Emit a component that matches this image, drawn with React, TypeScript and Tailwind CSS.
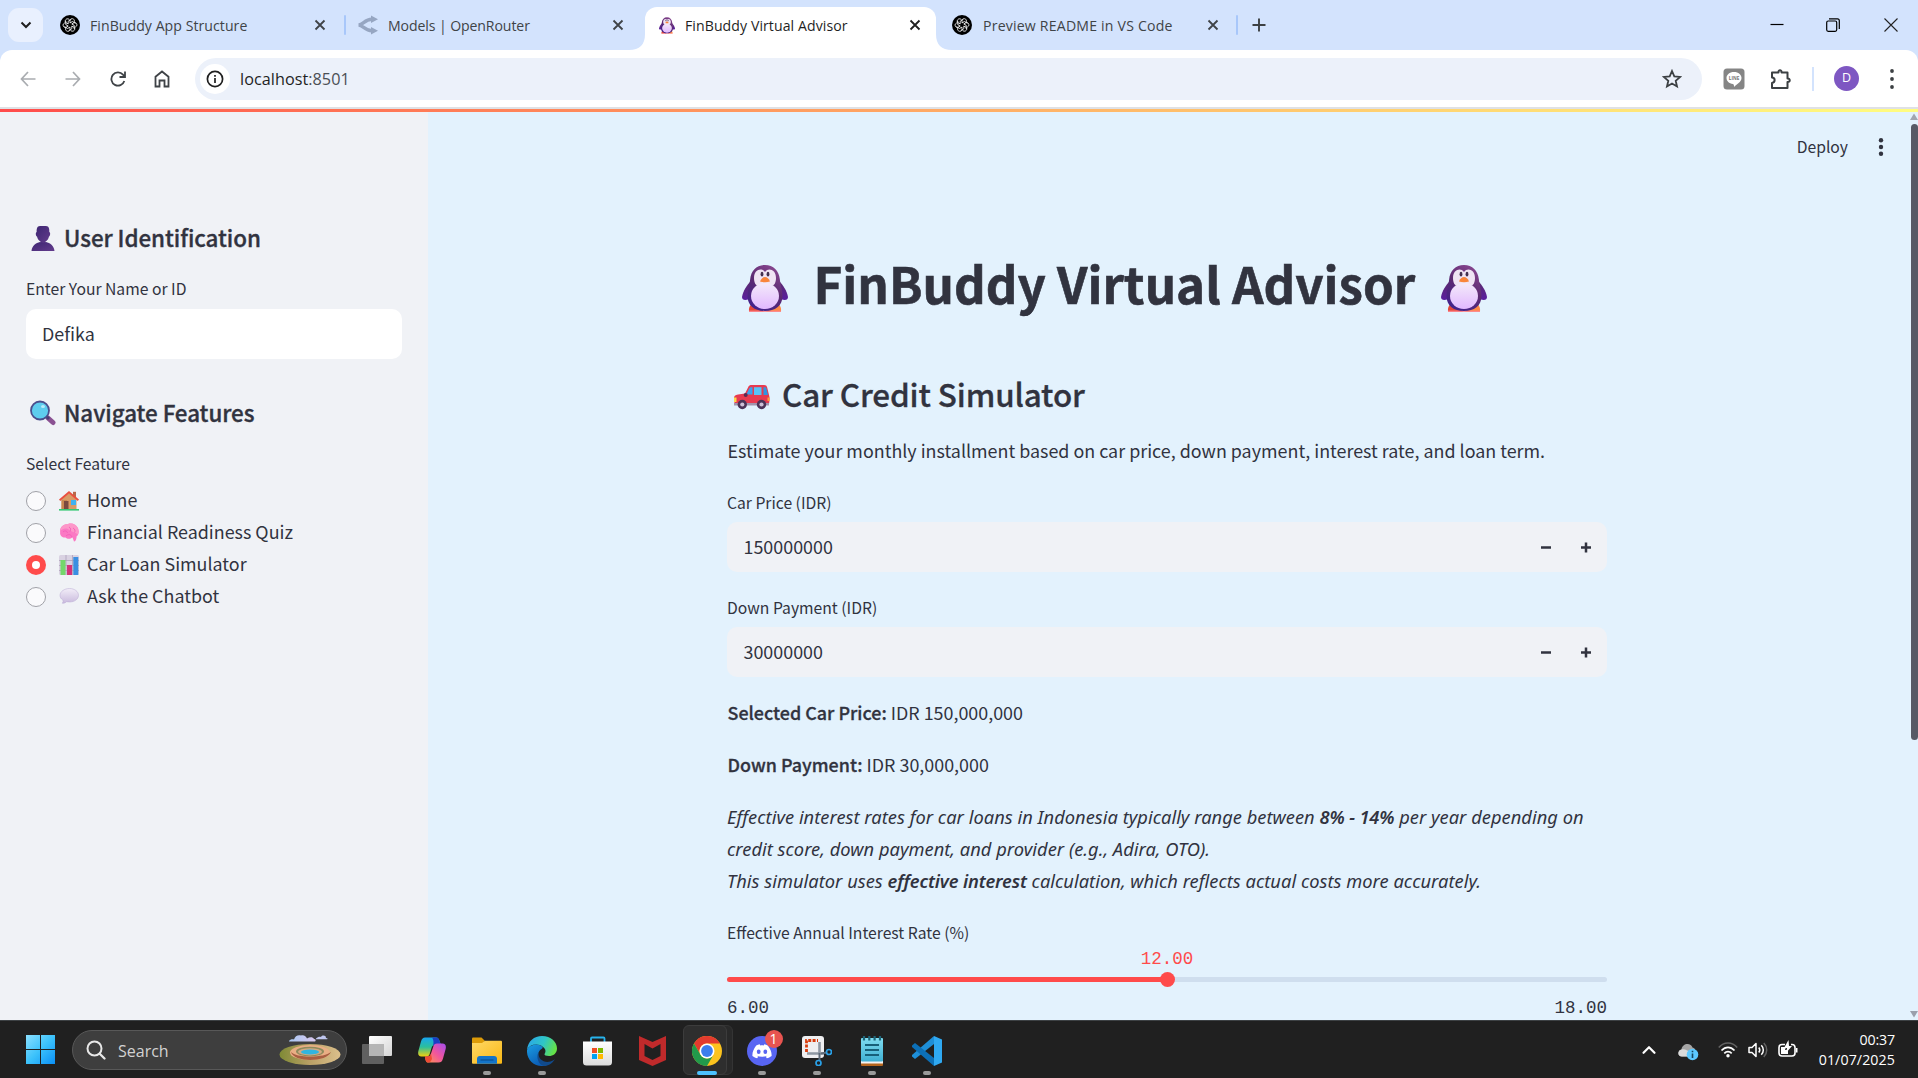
import React from "react";
import { Search, ChevronUp } from "lucide-react";

/* ---------- emoji drawings ---------- */

function Penguin({ className, id }: { className: string; id: string }) {
  return (
    <svg viewBox="0 0 46 47" className={className}>
      <defs>
        <linearGradient id={`${id}b`} x1="0.8" y1="0" x2="0.3" y2="1">
          <stop offset="0" stopColor="#8a4890" />
          <stop offset="0.5" stopColor="#5c2a72" />
          <stop offset="1" stopColor="#42228c" />
        </linearGradient>
        <linearGradient id={`${id}w`} x1="0" y1="0" x2="0" y2="1">
          <stop offset="0" stopColor="#5b2a6c" />
          <stop offset="1" stopColor="#5a1fa0" />
        </linearGradient>
        <linearGradient id={`${id}l`} x1="0" y1="0" x2="0" y2="1">
          <stop offset="0" stopColor="#f3eafa" />
          <stop offset="1" stopColor="#e2b8ff" />
        </linearGradient>
      </defs>
      <path d="M7 46.6C6.500 42 8.500 39 12 38L22 46.600Z" fill="#e2483a" />
      <path d="M39 46.600C39.500 42 37.500 39 34 38L24 46.600Z" fill="#ff8a45" />
      <path d="M7 45.600H39V46.800H7Z" fill="#ff7f86" />
      <path d="M9 16C5 20 1 26 0 32C0 35 3 36 7 34Z" fill={`url(#${id}w)`} />
      <path d="M37 16C41 20 45 26 46 32C46 35 43 36 39 34Z" fill={`url(#${id}w)`} />
      <path d="M23 0C31.500 0 37 6 37.800 14C38.200 20 40.500 25 40.500 31C40.500 41 33 46 23 46C13 46 5.500 41 5.500 31C5.500 25 7.800 20 8.200 14C9 6 14.500 0 23 0Z" fill={`url(#${id}b)`} />
      <path d="M23 7C20 2.500 12 4 12 13C12 18 14 21 17 21H29C32 21 34 18 34 13C34 4 26 2.500 23 7Z" fill="#f0e4f4" />
      <ellipse cx="23" cy="31" rx="14" ry="13" fill={`url(#${id}l)`} />
      <ellipse cx="20" cy="9.200" rx="1.400" ry="2.400" fill="#43304f" />
      <ellipse cx="26" cy="9.200" rx="1.400" ry="2.400" fill="#43304f" />
      <path d="M18 16.500C19 13.500 21 12 23 12C25 12 27 13.500 28 16.500Q23 17.800 18 16.500Z" fill="#f9853a" />
    </svg>
  );
}

function Silhouette() {
  return (
    <svg viewBox="0 0 24 25" className="h-[25px] w-6">
      <defs>
        <linearGradient id="sil" x1="0" y1="0" x2="1" y2="1">
          <stop offset="0" stopColor="#3d2672" />
          <stop offset="1" stopColor="#633b8c" />
        </linearGradient>
      </defs>
      <path d="M9 0H15C18 0 18.500 3 18.300 6C19.500 6 19.500 10 18 10.500C17.500 13 16 14.800 14.500 15.500V17H9.500V15.500C8 14.800 6.500 13 6 10.500C4.500 10 4.500 6 5.700 6C5.500 3 6 0 9 0Z" fill="url(#sil)" />
      <path d="M0.500 25C1 19.500 5 17 9 16C11 17 13 17 15 16C19 17 23 19.500 23.500 25Z" fill="url(#sil)" />
    </svg>
  );
}

function Magnifier() {
  return (
    <svg viewBox="0 0 26 26" className="h-[26px] w-[26px]">
      <path d="M18 18L23 22.500" stroke="#8a5192" strokeWidth="5" strokeLinecap="round" />
      <path d="M16 16L19 19" stroke="#4b3f73" strokeWidth="3" />
      <circle cx="10" cy="10.500" r="9" fill="#5ecdee" stroke="#4a4e8c" strokeWidth="1.800" />
      <ellipse cx="13" cy="6.500" rx="2" ry="1.600" fill="#b9ecfa" />
    </svg>
  );
}

function House() {
  return (
    <svg viewBox="0 0 20 20" className="size-5">
      <path d="M2.500 8L10 2L17.500 8V18.500H2.500Z" fill="#d99b66" />
      <path d="M2.500 9H8V18H2.500Z" fill="#c98850" />
      <path d="M14 0.800H17V6H14Z" fill="#b8694a" />
      <path d="M10 0L20 8.500L18.800 10L10 2.600L1.200 10L0 8.500Z" fill="#e9503f" />
      <path d="M5 10H9.500V18.500H5Z" fill="#7b4a40" />
      <path d="M12 9H17V14H12Z" fill="#3fb2f2" />
      <path d="M0 18H20V19.600H0Z" fill="#35c973" />
    </svg>
  );
}

function Brain() {
  return (
    <svg viewBox="0 0 20 20" className="size-5">
      <path d="M9 1C13 -0.500 17 1.500 19 5C20.500 9 19.500 12 17.500 13.500C17.800 16 16.500 18.500 15 18.500L13.500 14.500C11 16.500 8 16 6.500 14.500C3 15 0.500 12 1.200 9C0.200 5 4 1 9 1Z" fill="#fb79c4" />
      <path d="M9 1C14 -0.500 18 2 19 6C19.500 8 19.500 10 19 11.500C16 9 12 9 9 6C6 5 3 6 1.500 8C1 4 5 1 9 1Z" fill="#fd97c9" />
      <path d="M4 9C6 7 8 8 8.500 10M10 4C12 5 12 7 11 8.500M14 5C16 6 16.500 8 15.500 9.500M7 13C9 11 12 11 13 14" stroke="#f45cb8" strokeWidth="0.900" fill="none" />
    </svg>
  );
}

function BarChartEmoji() {
  return (
    <svg viewBox="0 0 20 20" className="size-5">
      <rect width="20" height="20" rx="1.500" fill="#d9d2e2" />
      <path d="M0 5.500H20M0 10.500H20M0 15.500H20M7 0V20M13.500 0V20" stroke="#a79bb5" strokeWidth="0.700" />
      <rect x="1.500" y="5" width="5" height="15" fill="#74d66b" />
      <rect x="8" y="10" width="5" height="10" fill="#d43279" />
      <rect x="14.300" y="2" width="5" height="18" fill="#3a8fe2" />
    </svg>
  );
}

function Speech() {
  return (
    <svg viewBox="0 0 20 20" className="size-5">
      <defs>
        <linearGradient id="sp" x1="0" y1="0" x2="0" y2="1">
          <stop offset="0" stopColor="#f2edf8" />
          <stop offset="1" stopColor="#c9badd" />
        </linearGradient>
      </defs>
      <path d="M10.500 1.500C15.500 1.500 19.500 4.500 19.500 8.300C19.500 12.200 15.500 15 10.500 15C9.500 15 8.500 14.900 7.500 14.700C6.500 15.800 4.500 16.500 3.200 16.200C4.200 15 4.300 14 3.800 13C2 11.800 1 10.300 1 8.300C1 4.500 5.500 1.500 10.500 1.500Z" fill="url(#sp)" stroke="#b9a9d2" strokeWidth="0.500" />
    </svg>
  );
}

function CarEmoji() {
  return (
    <svg viewBox="0 0 36 26" className="h-[26px] w-9">
      <path d="M0 14C0 12 1 11 4 10.500L11 9.500L14.500 2.500C15 1.500 16 1 17.500 1H30C32 1 32.800 1.800 33.200 3.500L35 11C36 14 35.500 17 35 20L32 21H3L0.500 19Z" fill="#e83a50" />
      <path d="M12.500 10L15.500 4C15.800 3.500 16.200 3.200 17 3.200H18.500V10.500H12.500Z" fill="#3aa3ee" />
      <path d="M20 3.200H27.500V11H20Z" fill="#58c4f7" />
      <path d="M29.500 3.200H31.500C32 3.200 32.200 3.500 32.400 4.500L34 11H29.500Z" fill="#2f96e3" />
      <circle cx="11.700" cy="11" r="2" fill="#5b2b52" />
      <path d="M0 13.500H2.500V18H0Z" fill="#ffd84a" />
      <path d="M33.500 13.500H35.500V17H33.500Z" fill="#ff9d3b" />
      <path d="M0 19H35V21.500H0Z" fill="#a394ad" />
      <circle cx="8.300" cy="20.500" r="4.700" fill="#4b3357" />
      <circle cx="8.300" cy="20.500" r="2.100" fill="#cdbfd6" />
      <circle cx="27.500" cy="20.500" r="4.700" fill="#4b3357" />
      <circle cx="27.500" cy="20.500" r="2.100" fill="#cdbfd6" />
    </svg>
  );
}

/* ---------- browser chrome ---------- */

function Close({ className }: { className: string }) {
  return (
    <svg viewBox="0 0 12 12" className={`size-3 shrink-0 ${className}`}>
      <path d="M1.500 1.500L10.500 10.500M10.500 1.500L1.500 10.500" stroke="currentColor" strokeWidth="1.800" />
    </svg>
  );
}

function GptIcon() {
  return (
    <svg viewBox="0 0 20 20" className="size-5 shrink-0">
      <circle cx="10" cy="10" r="10" fill="#000" />
      <g fill="none" stroke="#fff" strokeWidth="0.800">
        {[0, 60, 120, 180, 240, 300].map((a) => (
          <path key={a} transform={`rotate(${a} 10 10)`} d="M10 7.900V5.600C10 3.400 13.200 2.900 14.200 4.900C14.600 5.700 14.500 6.400 14.200 7.100M8.200 9V6.200L11.400 4.300" />
        ))}
      </g>
    </svg>
  );
}

function OpenRouterIcon() {
  return (
    <svg viewBox="0 0 20 20" className="size-5 shrink-0">
      <path d="M0.500 10C5 10 7 4 14 4.200M0.500 10C5 10 7 16 14 15.800" stroke="#96a6c2" strokeWidth="3.400" fill="none" />
      <path d="M13 0.500L20 4.200L13 8Z M13 12L20 15.800L13 19.500Z" fill="#96a6c2" />
    </svg>
  );
}

function TabStrip() {
  return (
    <div className="flex h-[50px] items-stretch bg-[#d3e3fd] text-[14.1px] text-[#3f4347]">
      <div className="ml-2 mt-2 flex h-[34px] w-[35px] items-center justify-center rounded-[11px] bg-[#e9f0fe]">
        <svg viewBox="0 0 12 8" className="h-2 w-3">
          <path d="M1.500 1.500L6 6L10.500 1.500" fill="none" stroke="#1f1f1f" strokeWidth="2" />
        </svg>
      </div>
      <div className="flex w-[301px] items-center pl-[17px]">
        <GptIcon />
        <span className="ml-[10px] flex-1 whitespace-nowrap pt-[2px] tracking-[0.05px]">FinBuddy App Structure</span>
        <Close className="mr-[18px]" />
      </div>
      <div className="flex w-[301px] items-center">
        <div className="h-5 w-0.5 rounded bg-[#a8c7fa]" />
        <span className="ml-3 flex"><OpenRouterIcon /></span>
        <span className="ml-[10px] flex-1 whitespace-nowrap pt-[2px] tracking-[-0.1px]">Models | OpenRouter</span>
        <Close className="mr-[21px]" />
      </div>
      <div className="relative mt-[7px] flex w-[291px] items-center rounded-t-xl bg-white pb-[7px] pl-[14px] text-[#1f1f1f]">
        <svg viewBox="0 0 16 16" className="absolute -left-4 bottom-0 size-4"><path d="M16 0V16H0Q16 16 16 0Z" fill="#fff" /></svg>
        <svg viewBox="0 0 16 16" className="absolute -right-4 bottom-0 size-4"><path d="M0 0V16H16Q0 16 0 0Z" fill="#fff" /></svg>
        <Penguin id="tab" className="h-[17px] w-4 shrink-0" />
        <span className="ml-[10px] flex-1 whitespace-nowrap pt-[2px] tracking-[0.08px]">FinBuddy Virtual Advisor</span>
        <Close className="mr-[15px]" />
      </div>
      <div className="flex w-[302px] items-center pl-4">
        <GptIcon />
        <span className="ml-[11px] flex-1 whitespace-nowrap pt-[2px] tracking-[0.2px]">Preview README in VS Code</span>
        <Close className="mr-[17px]" />
        <div className="h-5 w-0.5 rounded bg-[#a8c7fa]" />
      </div>
      <div className="flex items-center pl-[14px]">
        <svg viewBox="0 0 14 14" className="size-[14px]"><path d="M7 0.500V13.500M0.500 7H13.500" stroke="#3c4043" strokeWidth="1.900" /></svg>
      </div>
      <div className="ml-auto flex items-center pr-5 text-black">
        <svg viewBox="0 0 14 14" className="mr-[42px] size-[14px]"><path d="M0.500 6.500H13.500" stroke="#000" strokeWidth="1.200" /></svg>
        <svg viewBox="0 0 14 14" className="mr-[44px] size-[14px]">
          <rect x="0.700" y="3" width="10" height="10.300" rx="1.500" fill="none" stroke="#000" strokeWidth="1.200" />
          <path d="M3 0.800H11.500Q13.300 0.800 13.300 2.800V11" fill="none" stroke="#000" strokeWidth="1.200" />
        </svg>
        <svg viewBox="0 0 14 14" className="size-[14px]"><path d="M0.500 0.500L13.500 13.500M13.500 0.500L0.500 13.500" stroke="#222" strokeWidth="1.100" /></svg>
      </div>
    </div>
  );
}

function Toolbar() {
  return (
    <div className="bg-[#d3e3fd]">
      <div className="flex h-[57px] items-center rounded-t-xl bg-white text-[#3f4347]">
        <svg viewBox="0 0 16 16" className="ml-5 size-4 text-[#a9acb0]"><path d="M15.500 8H1.500M8 1L1.500 8L8 15" fill="none" stroke="currentColor" strokeWidth="1.700" /></svg>
        <svg viewBox="0 0 16 16" className="ml-[29px] size-4 text-[#a9acb0]"><path d="M0.500 8H14.500M8 1L14.500 8L8 15" fill="none" stroke="currentColor" strokeWidth="1.700" /></svg>
        <svg viewBox="0 0 16 16" className="ml-[29px] size-4"><path d="M14.300 10A6.600 6.600 0 1 1 13 3.700L14.500 5.300M15 0.500V6H9.500" fill="none" stroke="currentColor" strokeWidth="1.800" /></svg>
        <svg viewBox="0 0 16 18" className="ml-[28px] h-[18px] w-4"><path d="M1.500 16.500V6.800L8 1.500L14.500 6.800V16.500H10.500V10.500H5.500V16.500Z" fill="none" stroke="currentColor" strokeWidth="1.800" /></svg>
        <div className="ml-[25px] flex h-[42px] w-[1507px] items-center rounded-full bg-[#ecf1fa] pl-[5px]">
          <div className="flex size-[30px] items-center justify-center rounded-full bg-white">
            <svg viewBox="0 0 18 18" className="size-[18px]">
              <circle cx="9" cy="9" r="7.600" fill="none" stroke="#1f1f1f" strokeWidth="1.700" />
              <path d="M9 8V13M9 5V6.700" stroke="#1f1f1f" strokeWidth="1.700" />
            </svg>
          </div>
          <div className="ml-[10px] flex-1 pt-[2px] text-[16.2px] tracking-[0.05px] text-[#4b4f54]"><span className="text-[#1f1f1f]">localhost</span>:8501</div>
          <svg viewBox="0 0 20 20" className="mr-5 size-5"><path d="M10 2L12.300 7.400L18.200 7.900L13.700 11.800L15 17.500L10 14.500L5 17.500L6.300 11.800L1.800 7.900L7.700 7.400Z" fill="none" stroke="#3c4043" strokeWidth="1.800" /></svg>
        </div>
        <svg viewBox="0 0 22 22" className="ml-[21px] size-[22px]">
          <rect x="0.500" y="0.500" width="21" height="21" rx="3.500" fill="#858585" />
          <path d="M11 4C15.500 4 18.500 6.700 18.500 10C18.500 14 13.500 16.500 11 19C11 17.500 11 16.500 10 16C6 15.500 3.500 13 3.500 10C3.500 6.700 6.500 4 11 4Z" fill="#fff" />
          <text x="11" y="12" textAnchor="middle" fontSize="4.600" fontWeight="700" fill="#777" fontFamily="Open Sans">LINE</text>
        </svg>
        <svg viewBox="0 0 24 24" className="ml-[24px] size-6"><path d="M3 5.500H9.500C9 2.500 13 2.500 12.500 5.500H18.500V11.500C21.500 11 21.500 15.500 18.500 15V21H3V16C6.500 15.500 6.500 10.500 3 10.500Z" fill="none" stroke="#3c4043" strokeWidth="2" strokeLinejoin="round" /></svg>
        <div className="ml-[19px] h-6 w-0.5 bg-[#d3e3fd]" />
        <div className="ml-5 flex size-[25px] items-center justify-center rounded-full bg-[#7e57c2] text-[12.500px] text-white">D</div>
        <svg viewBox="0 0 6 20" className="ml-[30px] h-5 w-[6px]" fill="#3c4043"><circle cx="3" cy="2" r="1.900" /><circle cx="3" cy="10" r="1.900" /><circle cx="3" cy="18" r="1.900" /></svg>
      </div>
      <div className="h-0.5 bg-[#dfe1e5]" />
    </div>
  );
}

/* ---------- Streamlit page ---------- */

const features = [
  { label: "Home", icon: <House />, on: false },
  { label: "Financial Readiness Quiz", icon: <Brain />, on: false },
  { label: "Car Loan Simulator", icon: <BarChartEmoji />, on: true },
  { label: "Ask the Chatbot", icon: <Speech />, on: false },
];

function Sidebar() {
  return (
    <aside className="flex w-[428px] shrink-0 flex-col bg-[#f0f2f6] px-[26px] pt-[111px]">
      <h3 className="flex h-[30px] items-center text-[22.4px] font-medium tracking-[-0.06px] [-webkit-text-stroke:0.35px]">
        <span className="ml-[5px] mr-[9px] flex"><Silhouette /></span>User Identification
      </h3>
      <label className="mt-[26px] h-5 text-[15.7px] leading-5">Enter Your Name or ID</label>
      <div className="mt-[10px] flex h-[50px] items-center rounded-[10px] bg-white px-4 pb-[2px] text-[17.9px]">Defika</div>
      <h3 className="mt-[39px] flex h-[30px] items-center text-[22.4px] font-medium tracking-[-0.06px] [-webkit-text-stroke:0.35px]">
        <span className="ml-1 mr-2 flex"><Magnifier /></span>Navigate Features
      </h3>
      <label className="mt-[26px] h-5 text-[15.7px] leading-5">Select Feature</label>
      <div className="mt-[11px] flex flex-col">
        {features.map((f) => (
          <div key={f.label} className="flex h-8 items-center text-[17.9px]">
            <span className={f.on ? "flex size-5 items-center justify-center rounded-full bg-[#ff4b4b]" : "size-5 rounded-full border border-[#a0a1a7] bg-[#fafafc]"}>
              {f.on && <span className="size-2 rounded-full bg-white" />}
            </span>
            <span className="ml-[13px] mr-2 flex pb-px">{f.icon}</span>
            <span className="pb-[3px]">{f.label}</span>
          </div>
        ))}
      </div>
    </aside>
  );
}

function NumberField({ label, value }: { label: string; value: string }) {
  return (
    <div className="flex flex-col">
      <label className="h-5 text-[15.7px] leading-5">{label}</label>
      <div className="mt-[9px] flex h-[50px] items-center rounded-[10px] bg-[#f0f2f6] px-4 text-[17.9px]">
        <span className="flex-1 pb-[2px] pl-[0.500px]">{value}</span>
        <svg viewBox="0 0 10 10" className="mr-[30px] size-[10px]"><path d="M0 5.500H10" stroke="#31333f" strokeWidth="2.500" /></svg>
        <svg viewBox="0 0 10 11" className="mt-px h-[11px] w-[10px]"><path d="M0 5.500H10M5 0.500V10.500" stroke="#31333f" strokeWidth="2.500" /></svg>
      </div>
    </div>
  );
}

function MainPanel() {
  return (
    <main className="flex flex-1 overflow-hidden bg-[#e3f2fd]">
      <div className="ml-[299px] flex w-[880px] shrink-0 flex-col pt-[141px] text-[17.9px]">
        <h1 className="flex h-[66px] items-center text-[49.3px] font-bold leading-[60px]">
          <Penguin id="pl" className="ml-[15px] mt-1 h-[47px] w-[46px]" />
          <span className="ml-[25.500px] mr-[26px] whitespace-nowrap pb-[6px] [-webkit-text-stroke:0.6px]">FinBuddy Virtual Advisor</span>
          <Penguin id="pr" className="mt-1 h-[47px] w-[46px]" />
        </h1>
        <h2 className="mt-[55px] flex h-[42px] items-center text-[31.4px] font-medium leading-10 [-webkit-text-stroke:0.3px]">
          <span className="ml-[7px] mr-3 mt-1 flex"><CarEmoji /></span>
          <span className="pb-[3px] tracking-[-0.12px]">Car Credit Simulator</span>
        </h2>
        <p className="mt-[18px] h-8 whitespace-nowrap pl-[0.500px] leading-8">
          Estimate your monthly installment based on car price, down payment, interest rate, and loan term.
        </p>
        <div className="mt-[27px]"><NumberField label="Car Price (IDR)" value="150000000" /></div>
        <div className="mt-[26px]"><NumberField label="Down Payment (IDR)" value="30000000" /></div>
        <p className="mt-[19px] h-8 pl-[0.500px] leading-8"><strong className="font-medium [-webkit-text-stroke:0.3px]">Selected Car Price:</strong> IDR 150,000,000</p>
        <p className="mt-5 h-8 pl-[0.500px] leading-8"><strong className="font-medium [-webkit-text-stroke:0.3px]">Down Payment:</strong> IDR 30,000,000</p>
        <p className="mt-[21px] whitespace-nowrap font-['Noto_Sans','Open_Sans',sans-serif] text-[18.3px] italic leading-8 tracking-[0.025px]">
          Effective interest rates for car loans in Indonesia typically range between <strong className="font-semibold tracking-[-0.15px]">8% - 14%</strong> per year depending on
          <br />
          credit score, down payment, and provider (e.g., Adira, OTO).
          <br />
          This simulator uses <strong className="font-semibold tracking-[-0.15px]">effective interest</strong> calculation, which reflects actual costs more accurately.
        </p>
        <label className="mt-[26px] h-5 text-[15.7px] leading-5">Effective Annual Interest Rate (%)</label>
        <div className="mt-[6px] h-5 text-center font-['Liberation_Mono',monospace] text-[17.5px] leading-5 text-[#ff4b4b]">12.00</div>
        <div className="mt-2 flex h-[5px] items-center rounded-full bg-[#cfdeee]">
          <div className="flex h-[5px] w-1/2 items-center justify-end rounded-full bg-[#ff4b4b]">
            <span className="-mr-[7.500px] size-[15px] shrink-0 rounded-full bg-[#ff4b4b]" />
          </div>
        </div>
        <div className="mt-4 flex h-5 justify-between font-['Liberation_Mono',monospace] text-[17.5px] leading-5">
          <span>6.00</span>
          <span>18.00</span>
        </div>
      </div>
      <div className="ml-auto flex h-[70px] items-center pr-[26px] text-[15.7px]">
        Deploy
        <svg viewBox="0 0 6 18" className="ml-[30px] h-[18px] w-[6px]" fill="#31333f"><circle cx="3" cy="2.300" r="2.200" /><circle cx="3" cy="9" r="2.200" /><circle cx="3" cy="15.700" r="2.200" /></svg>
      </div>
      <div className="flex w-[8px] shrink-0 flex-col items-center">
        <svg viewBox="0 0 8 7" className="mt-px h-[7px] w-2"><path d="M4 0.500L8 7H0Z" fill="#a0a5b0" /></svg>
        <div className="mt-1 h-[616px] w-[7px] rounded-full bg-[#575a66]" />
        <svg viewBox="0 0 8 7" className="mb-[2px] mt-auto h-[7px] w-2"><path d="M4 6.500L8 0H0Z" fill="#9a9fab" /></svg>
      </div>
    </main>
  );
}

/* ---------- taskbar ---------- */

function WindowsLogo() {
  return (
    <svg viewBox="0 0 29 29" className="size-[29px]">
      <defs><linearGradient id="win" x1="0" y1="0" x2="1" y2="1"><stop offset="0" stopColor="#8be0ff" /><stop offset="0.500" stopColor="#3cc2fb" /><stop offset="1" stopColor="#0a8ff5" /></linearGradient></defs>
      <path d="M0 0H14V14H0ZM15 0H29V14H15ZM0 15H14V29H0ZM15 15H29V29H15Z" fill="url(#win)" />
    </svg>
  );
}

function Island() {
  return (
    <svg viewBox="0 0 62 32" className="h-8 w-[62px]">
      <defs>
        <linearGradient id="isl" x1="0" y1="0" x2="1" y2="0"><stop offset="0" stopColor="#7f8a35" /><stop offset="0.500" stopColor="#b9a066" /><stop offset="1" stopColor="#dcc08c" /></linearGradient>
        <linearGradient id="cld" x1="0" y1="0" x2="1" y2="0"><stop offset="0" stopColor="#a9c8f2" /><stop offset="1" stopColor="#d9c6ec" /></linearGradient>
      </defs>
      <ellipse cx="31" cy="20.500" rx="30.500" ry="10.500" fill="url(#isl)" />
      <ellipse cx="31" cy="18.500" rx="20" ry="7.500" fill="#e9ae84" />
      <path d="M12 18C13 23 22 26 31 26C41 26 50 23 52 18C48 21 41 22.500 31 22.500C22 22.500 15 21 12 18Z" fill="#a85f42" />
      <ellipse cx="31" cy="17.500" rx="14" ry="4.800" fill="#8d8b5c" />
      <ellipse cx="31" cy="17.800" rx="12" ry="3.600" fill="#d3a983" />
      <ellipse cx="31" cy="18" rx="9" ry="2.600" fill="#31b5e0" />
      <path d="M10 7C11 5 14 5 15 5.500C16 2 19 0.500 22 1.500C25 0.500 27 2.500 28 4.500C31 2.500 34 3 35 5C37 5 37 7 36 7.500H10Z" fill="url(#cld)" />
      <path d="M37 4.500C39 2.500 41 2.500 42 3C43 1 47 1 47 4C49 4.500 49 5 48 5.300H37Z" fill="#bfc6ee" />
    </svg>
  );
}

function TaskView() {
  return (
    <svg viewBox="0 0 30 28" className="h-7 w-[30px]">
      <defs><linearGradient id="tvw" x1="0" y1="0" x2="1" y2="1"><stop offset="0" stopColor="#fff" /><stop offset="1" stopColor="#d5d5d5" /></linearGradient></defs>
      <rect x="7" y="0" width="23" height="20" rx="1" fill="url(#tvw)" />
      <rect x="0" y="8" width="22" height="20" rx="1" fill="#6c6c6c" fillOpacity="0.850" />
      <rect x="7" y="8" width="15" height="12" fill="#b5b5b5" />
    </svg>
  );
}

function Copilot() {
  return (
    <svg viewBox="0 0 28 26" className="h-[26px] w-7">
      <defs>
        <linearGradient id="cpa" x1="0" y1="0" x2="0" y2="1"><stop offset="0" stopColor="#18a6f0" /><stop offset="0.500" stopColor="#2bbf9c" /><stop offset="1" stopColor="#f2d10d" /></linearGradient>
        <linearGradient id="cpb" x1="1" y1="0" x2="0" y2="1"><stop offset="0" stopColor="#a44df0" /><stop offset="0.500" stopColor="#f2569b" /><stop offset="1" stopColor="#ff9a4a" /></linearGradient>
      </defs>
      <path d="M7 0.500H18C20.500 0.500 21 2.500 21.500 4L23 8H17C15 8 14 9 13.500 11L11.500 17.500C11 19 9.500 19.500 8 19.500H3.500C0.500 19.500 -0.500 17 0.500 13.500L3 4.500C4 1.500 5 0.500 7 0.500Z" fill="url(#cpa)" />
      <path d="M14 0.500H18C20.500 0.500 21 2.500 21.500 4L23 8H17Q16 8 15 9C16 5 15.500 2.500 14 0.500Z" fill="#1c3fc4" />
      <path d="M20.500 25.500H10.500C8 25.500 7.500 23.500 7 19.500H10C12 19.500 12.500 18 13 16.500L15.500 9C16 7.500 17 6.500 19 6.500H24.500C27.500 6.500 28.500 9 27.500 12.500L25 21.500C24 24.500 23 25.500 20.500 25.500Z" fill="url(#cpb)" />
      <path d="M7 19.500H10C12 19.500 12.500 18 13 16.500L14 22C13 24.500 12 25.500 10.500 25.500C8 25.500 7.500 23.500 7 19.500Z" fill="#f04b35" />
    </svg>
  );
}

function Folder() {
  return (
    <svg viewBox="0 0 30 27" className="h-[27px] w-[30px]">
      <defs><linearGradient id="fol" x1="0" y1="0" x2="1" y2="1"><stop offset="0" stopColor="#ffd866" /><stop offset="1" stopColor="#f9b815" /></linearGradient></defs>
      <path d="M0 1.500Q0 0.500 1 0.500H9.500L12.500 3.500V8H0Z" fill="#dd9b08" />
      <path d="M0 6H10L13 3.800H29Q30 3.800 30 5V26Q30 26.800 29 26.800H1Q0 26.800 0 26Z" fill="url(#fol)" />
      <path d="M5 26.800V22Q5 19 8 19H22Q25 19 25 22V26.800Z" fill="#1374c9" />
      <path d="M8.500 23H21.500" stroke="#0b4f92" strokeWidth="1.200" />
    </svg>
  );
}

function Edge() {
  return (
    <svg viewBox="0 0 30 30" className="size-[30px]">
      <defs>
        <linearGradient id="eg1" x1="0" y1="0.200" x2="1" y2="0.500"><stop offset="0" stopColor="#2ba6ea" /><stop offset="0.550" stopColor="#2fc6c6" /><stop offset="1" stopColor="#66e245" /></linearGradient>
        <linearGradient id="eg2" x1="0" y1="0" x2="0.600" y2="1"><stop offset="0" stopColor="#1b9de2" /><stop offset="1" stopColor="#0a5bb5" /></linearGradient>
      </defs>
      <path d="M0 14C1 5 7 0 15 0C24 0 30 6 30 12.500C30 17.500 26 20 22 20C19 20 17 19 17.500 18C19 16 19 13 16 11C11 7 3 8 0 14Z" fill="url(#eg1)" />
      <path d="M0 14C2 9.500 8 7 13 9.200C16 10.500 16.500 12 14.500 13C9 16 10 26 20 29C18 30 16 30 15 30C6 30 -0.500 23 0 14Z" fill="url(#eg2)" />
      <path d="M11.500 16C10.500 23 17 27.500 23.500 25.500C25 25 27 24 28 23C25.500 27.500 21 30 17 30C11 28.500 9 21 11.500 16Z" fill="#114a8b" />
    </svg>
  );
}

function Store() {
  return (
    <svg viewBox="0 0 29 30" className="h-[30px] w-[29px]">
      <defs><linearGradient id="sto" x1="0" y1="0" x2="0" y2="1"><stop offset="0" stopColor="#fff" /><stop offset="1" stopColor="#dcdcdc" /></linearGradient></defs>
      <path d="M8 6V2.500Q8 1.500 9 1.500H20.500Q21.500 1.500 21.500 2.500V6" fill="none" stroke="#27b3ec" strokeWidth="1.800" />
      <path d="M0 5.500H29V26Q29 29.500 25.500 29.500H3.500Q0 29.500 0 26Z" fill="url(#sto)" />
      <path d="M9 12H14V17H9Z" fill="#f04e23" /><path d="M15 12H20V17H15Z" fill="#7fba00" />
      <path d="M9 18H14V23H9Z" fill="#00a1f1" /><path d="M15 18H20V23H15Z" fill="#ffb900" />
    </svg>
  );
}

function McAfee() {
  return (
    <svg viewBox="0 0 27 30" className="h-[30px] w-[27px]">
      <path d="M0 0L13.500 6L27 0V24L13.500 30L0 24ZM5.500 8V20L13.500 24L21.500 20V8L13.500 12.500Z" fill="#c02a2b" fillRule="evenodd" />
    </svg>
  );
}

function Chrome() {
  return (
    <svg viewBox="0 0 30 30" className="size-[30px]">
      <circle cx="15" cy="15" r="15" fill="#fcc31e" />
      <path d="M2 7.500A15 15 0 0 1 28 7.500H15A7.500 7.500 0 0 0 8.500 18.800Z" fill="#e33b2e" />
      <path d="M2 7.500L8.500 18.800A7.500 7.500 0 0 0 21.500 18.800L15 30A15 15 0 0 1 2 7.500Z" fill="#229a4b" />
      <circle cx="15" cy="15" r="7.500" fill="#fff" />
      <circle cx="15" cy="15" r="5.900" fill="#3b7ded" />
    </svg>
  );
}

function Discord() {
  return (
    <svg viewBox="0 0 30 30" className="size-[30px]">
      <circle cx="15" cy="15" r="15" fill="#5865f2" />
      <path d="M20.800 9.500C19.600 8.900 18.300 8.500 17.300 8.300L16.700 9.500C15.600 9.300 14.400 9.300 13.300 9.500L12.700 8.300C11.600 8.500 10.400 8.900 9.200 9.500C6.500 13 5.200 16.500 5.400 20C7 21.300 8.700 22 10.200 22.300L11.300 20.500C10.700 20.300 10.200 20 9.700 19.700C13 21.200 17 21.200 20.300 19.700C19.800 20 19.300 20.300 18.700 20.500L19.800 22.300C21.400 22 23 21.300 24.600 20C24.900 16.500 23.500 13 20.800 9.500Z" fill="#fff" />
      <ellipse cx="11.700" cy="15.800" rx="1.900" ry="2.200" fill="#5865f2" /><ellipse cx="18.300" cy="15.800" rx="1.900" ry="2.200" fill="#5865f2" />
    </svg>
  );
}

function Snip() {
  return (
    <svg viewBox="0 0 30 30" className="size-[30px]">
      <rect x="0" y="0" width="22" height="22" rx="3" fill="#efeff1" />
      <path d="M4.500 16V4.500H16" fill="none" stroke="#d83b0c" strokeWidth="2.800" strokeDasharray="3 1.400" />
      <path d="M17.500 6V17.500M5 17.500H22" stroke="#8f98a3" strokeWidth="2.600" fill="none" />
      <path d="M17.500 17V24M19 17.500L25 16.500" stroke="#5e6a78" strokeWidth="2" />
      <circle cx="16.500" cy="27" r="2.500" fill="none" stroke="#2aa1e8" strokeWidth="1.700" /><circle cx="27" cy="16" r="2.500" fill="none" stroke="#2aa1e8" strokeWidth="1.700" />
    </svg>
  );
}

function Notepad() {
  return (
    <svg viewBox="0 0 22 30" className="h-[30px] w-[22px]">
      <defs><linearGradient id="ntp" x1="0" y1="0" x2="0" y2="1"><stop offset="0" stopColor="#7fdcf0" /><stop offset="1" stopColor="#3fb0d2" /></linearGradient></defs>
      <rect x="0" y="25" width="22" height="5" rx="1" fill="#b5651d" />
      <rect x="0" y="24" width="22" height="3.500" fill="#f3f3f3" />
      <rect x="0" y="2" width="22" height="23.500" rx="1" fill="url(#ntp)" />
      <path d="M3 0V4.500M8.300 0V4.500M13.600 0V4.500M19 0V4.500" stroke="#1c6478" strokeWidth="2.200" />
      <path d="M4 9H18M4 14H18M4 19H18" stroke="#176079" strokeWidth="1.800" />
    </svg>
  );
}

function VsCode() {
  return (
    <svg viewBox="0 0 30 30" className="size-[30px]">
      <path d="M22 0V8L3 23L0 20.500V19Z" fill="#1e8fd8" />
      <path d="M22 30V22L3 7L0 9.500V11Z" fill="#0c70b8" />
      <path d="M22 0L30 3.500V26.500L22 30Z" fill="#2fa9f2" />
    </svg>
  );
}

const apps = [
  { name: "explorer", icon: <Folder />, dot: true },
  { name: "edge", icon: <Edge />, dot: true },
  { name: "store", icon: <Store />, dot: false },
  { name: "mcafee", icon: <McAfee />, dot: false },
  { name: "chrome", icon: <Chrome />, dot: true },
  { name: "discord", icon: <Discord />, dot: true },
  { name: "snip", icon: <Snip />, dot: true },
  { name: "notepad", icon: <Notepad />, dot: true },
  { name: "vscode", icon: <VsCode />, dot: true },
];

function Taskbar() {
  return (
    <footer className="flex h-[58px] items-stretch border-t border-[#3d4144] bg-[#202020] font-['Open_Sans','Noto_Sans',sans-serif] text-white">
      <div className="ml-[26px] flex items-center"><WindowsLogo /></div>
      <div className="ml-[17px] mt-[9px] flex h-10 w-[275px] items-center rounded-full border border-[#585858] bg-[#3e3e3e] pl-[13px] pr-[5px]">
        <svg viewBox="0 0 20 20" className="size-5" fill="none" stroke="#e8e8e8" strokeLinecap="round">
          <circle cx="8.500" cy="8.500" r="7" strokeWidth="2" />
          <path d="M13.700 13.700L18.500 18.500" strokeWidth="2.300" />
        </svg>
        <span className="ml-[12px] flex-1 pt-px text-[16px] text-[#d2d2d2]">Search</span>
        <Island />
      </div>
      <div className="ml-[15px] flex items-center"><TaskView /></div>
      <div className="ml-[26px] flex items-center"><Copilot /></div>
      <div className="ml-[13.500px] flex items-center">
        {apps.map((a) => (
          <div key={a.name} className="relative flex h-full w-[55px] items-center justify-center pt-[2px]">
            {a.name === "chrome" && (
              <>
                <div className="absolute left-[9px] top-1 h-[50px] w-[44px] rounded-md border border-[#343434] bg-[#292929]" />
                <div className="absolute left-[3px] top-1 h-[50px] w-[44px] rounded-md border border-[#3c3c3c] bg-[#2e2e2e]" />
              </>
            )}
            <span className="relative flex">{a.icon}</span>
            {a.name === "discord" && (
              <span className="absolute left-[30px] top-[9px] flex size-[18px] items-center justify-center rounded-full bg-[#e85450] text-[14px] leading-none">1</span>
            )}
            {a.dot && (
              <span className={a.name === "chrome" ? "absolute bottom-[3px] left-[17.500px] h-1 w-5 rounded-full bg-[#4cc2ff]" : "absolute bottom-[3px] left-[23.500px] h-1 w-2 rounded-full bg-[#9a9a9a]"} />
            )}
          </div>
        ))}
      </div>
      <div className="ml-auto flex items-center pr-[23px]">
        <ChevronUp className="mr-[18px] size-[22px]" strokeWidth={2.4} />
        <svg viewBox="0 0 21 18" className="mr-[19px] mt-1 h-[18px] w-[21px]">
          <path d="M4 13.500C-1 13.500 -0.500 7 3.500 6.500C4 0 13 -1 14.500 4.500C18 5 18 9 16 13.500Z" fill="#a5a5a5" />
          <path d="M4 13.500C-1 13.500 -0.500 7 3.500 6.500C7 5.500 9 7.500 12 9V13.500Z" fill="#dadada" />
          <circle cx="14.500" cy="11.500" r="5.800" fill="#5cc8ff" /><path d="M14.500 10.500V15M14.500 7.800V9.300" stroke="#17445e" strokeWidth="1.600" />
        </svg>
        <svg viewBox="0 0 20 16" className="mr-[10px] h-4 w-5" fill="none" strokeWidth="1.700">
          <path d="M0.800 5.500C6 -0.500 14 -0.500 19.200 5.500" stroke="#636363" />
          <path d="M3.500 8.500C7.500 4.200 12.500 4.200 16.500 8.500M6.300 11.300C8.500 9 11.500 9 13.700 11.300" stroke="#fff" />
          <circle cx="10" cy="13.700" r="1.700" fill="#fff" />
        </svg>
        <svg viewBox="0 0 20 18" className="mr-[10px] h-[18px] w-5" fill="none" stroke="#fff" strokeWidth="1.500">
          <path d="M1 6.500H4L8 2.500V15.500L4 11.500H1Z" strokeLinejoin="round" />
          <path d="M10.800 6.500C12 8 12 10 10.800 11.500M13.300 4.300C16 7 16 11 13.300 13.700" />
          <path d="M15.800 2C19.700 6 19.700 12 15.800 16" stroke="#636363" />
        </svg>
        <svg viewBox="0 0 20 18" className="mb-0.5 mr-[21px] h-[18px] w-5">
          <path d="M7 4.500H4Q1 4.500 1 7.500V13Q1 16 4 16H14Q17 16 17 13V7.500Q17 4.500 14 4.500H13" fill="none" stroke="#fff" strokeWidth="1.600" />
          <path d="M3 7H8L7 10H10V14H3Z" fill="#fff" /><path d="M10.500 0L6 8H9L8 13L14 6H11Z" fill="#fff" />
          <path d="M18.700 8V12.500" stroke="#fff" strokeWidth="1.600" />
        </svg>
        <div className="flex flex-col items-end text-[14.2px] leading-[20px]">
          <span className="tracking-[-0.15px]">00:37</span>
          <span className="tracking-[0.1px]">01/07/2025</span>
        </div>
      </div>
    </footer>
  );
}

export default function App() {
  return (
    <div className="flex h-[1078px] w-[1918px] flex-col overflow-hidden font-['Open_Sans','Noto_Sans',sans-serif]">
      <TabStrip />
      <Toolbar />
      <div className="h-[3px] shrink-0 bg-linear-to-r from-[#ff4b4b] to-[#fffd80]" />
      <div className="flex min-h-0 flex-1 overflow-hidden font-['Noto_Sans_CJK_SC',sans-serif] text-[#31333f]">
        <Sidebar />
        <MainPanel />
      </div>
      <Taskbar />
    </div>
  );
}
